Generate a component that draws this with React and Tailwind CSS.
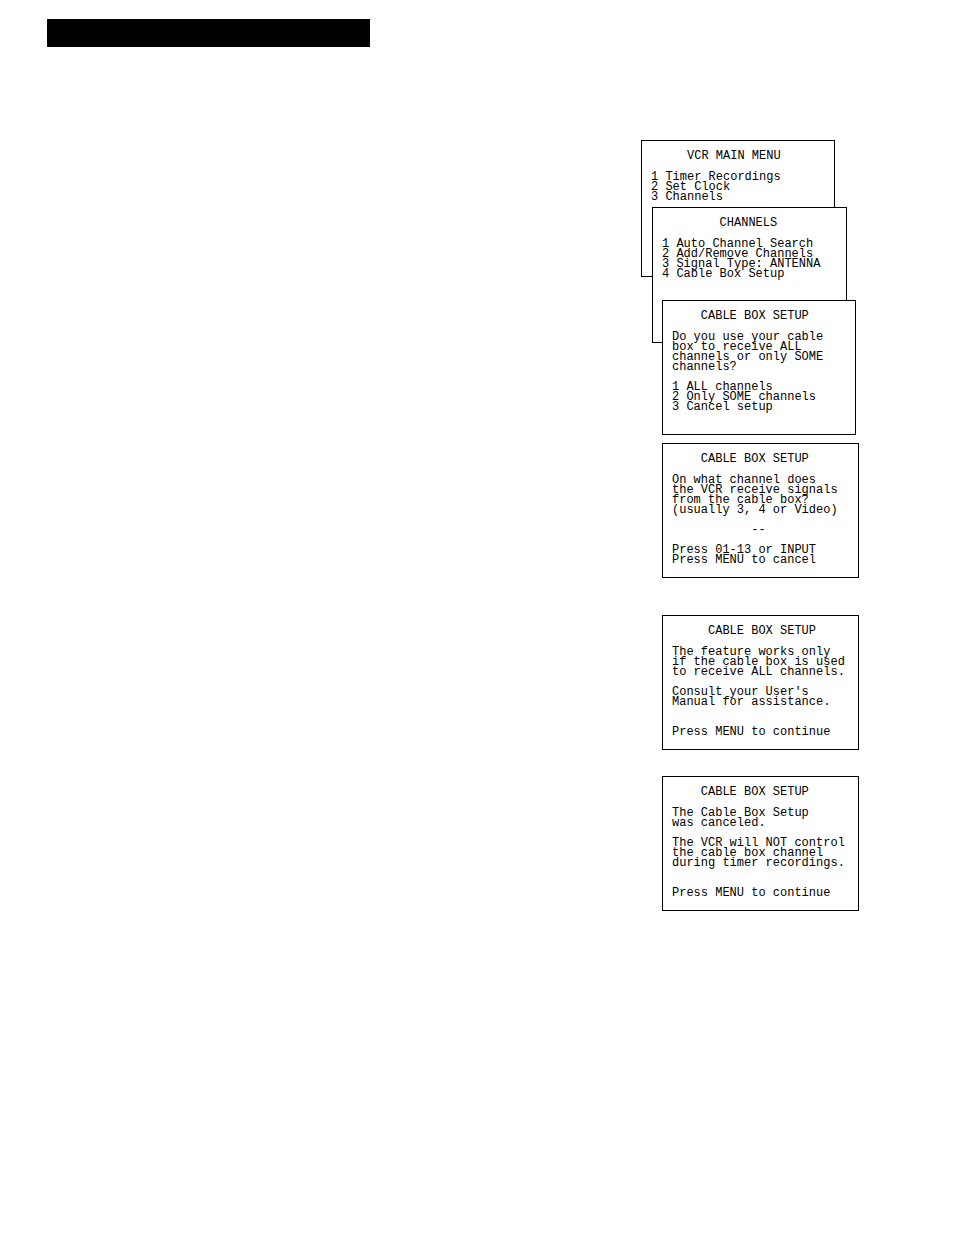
import clsx from 'clsx'

const menuStack = [
  {
    title: '     VCR MAIN MENU',
    body: `1 Timer Recordings
2 Set Clock
3 Channels`,
    className: 'w-[194px] h-[137px]',
  },
  {
    title: '        CHANNELS',
    body: `1 Auto Channel Search
2 Add/Remove Channels
3 Signal Type: ANTENNA
4 Cable Box Setup`,
    className: 'w-[195px] h-[136px] ml-[11px] -mt-[70px]',
  },
  {
    title: '    CABLE BOX SETUP',
    body: `Do you use your cable
box to receive ALL
channels or only SOME
channels?

1 ALL channels
2 Only SOME channels
3 Cancel setup`,
    className: 'w-[194px] h-[135px] ml-[21px] -mt-[43px]',
  },
]

const screens = [
  {
    title: '    CABLE BOX SETUP',
    body: `On what channel does
the VCR receive signals
from the cable box?
(usually 3, 4 or Video)

           --

Press 01-13 or INPUT
Press MENU to cancel`,
    className: 'mt-2',
  },
  {
    title: '     CABLE BOX SETUP',
    body: `The feature works only
if the cable box is used
to receive ALL channels.

Consult your User's
Manual for assistance.


Press MENU to continue`,
    className: 'mt-[37px]',
  },
  {
    title: '    CABLE BOX SETUP',
    body: `The Cable Box Setup
was canceled.

The VCR will NOT control
the cable box channel
during timer recordings.


Press MENU to continue`,
    className: 'mt-[26px]',
  },
]

function Screen({ title, body, className }) {
  return (
    <section
      className={clsx(
        'relative border border-black bg-white pl-[9px] pt-[10px] text-black',
        className
      )}
    >
      <h2 className="whitespace-pre font-['Liberation_Mono',monospace] text-[12px] leading-[10px] font-normal">
        {title}
      </h2>
      <pre className="mt-[11px] font-['Liberation_Mono',monospace] text-[12px] leading-[10px]">
        {body}
      </pre>
    </section>
  )
}

export default function App() {
  return (
    <div className="min-h-screen bg-white pt-[19px] pb-12">
      {/* Section heading bar */}
      <header className="ml-[47px] h-7 w-[323px] bg-black" />

      <main className="mt-[93px] mr-[95px] flex justify-end">
        <div className="w-[218px]">
          {/* Overlapping menus */}
          {menuStack.map((screen) => (
            <Screen key={screen.title} {...screen} />
          ))}

          {/* Follow-up screens */}
          {screens.map((screen) => (
            <Screen
              key={screen.body}
              title={screen.title}
              body={screen.body}
              className={clsx('ml-[21px] h-[135px]', screen.className)}
            />
          ))}
        </div>
      </main>
    </div>
  )
}
